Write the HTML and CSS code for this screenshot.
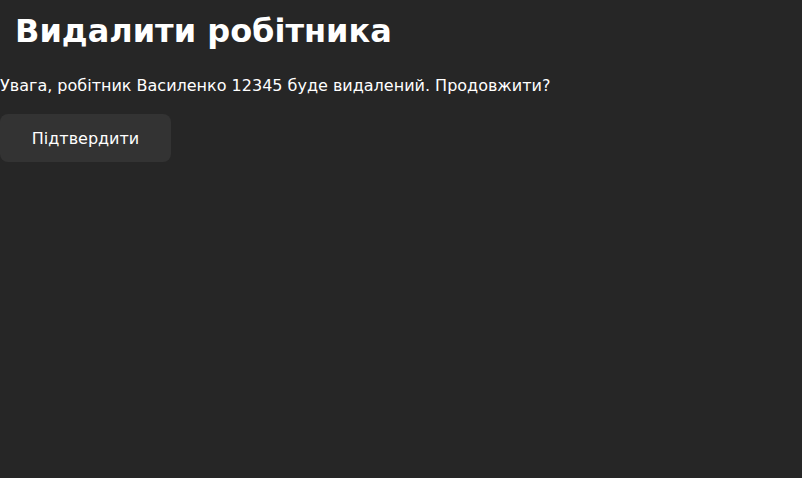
FILE: index.html
```html
<!DOCTYPE html>
<html lang="uk">
<head>
<meta charset="utf-8">
<link rel="stylesheet" href="styles.css">
</head>
<body>
<div class="page">
  <h1 class="title">Видалити робітника</h1>
  <p class="message">Увага, робітник Василенко 12345 буде видалений. Продовжити?</p>
  <button class="confirm">Підтвердити</button>
</div>
</body>
</html>
```
FILE: styles.css
```css
html, body {
  margin: 0;
  background: #262626;
  color: #ffffff;
  font-family: "DejaVu Sans", sans-serif;
}
.page {
  display: flex;
  flex-direction: column;
  align-items: flex-start;
}
.title {
  font-size: 32px;
  font-weight: bold;
  margin: 11px 0 0 15px;
  line-height: 40px;
}
.message {
  font-size: 16px;
  margin: 25px 0 0 0;
  line-height: 20px;
}
.confirm {
  margin-top: 18px;
  background: #333333;
  color: #ffffff;
  border: none;
  border-radius: 8px;
  font-family: "DejaVu Sans", sans-serif;
  font-size: 16px;
  width: 171px;
  height: 48px;
  padding: 0;
}
```
